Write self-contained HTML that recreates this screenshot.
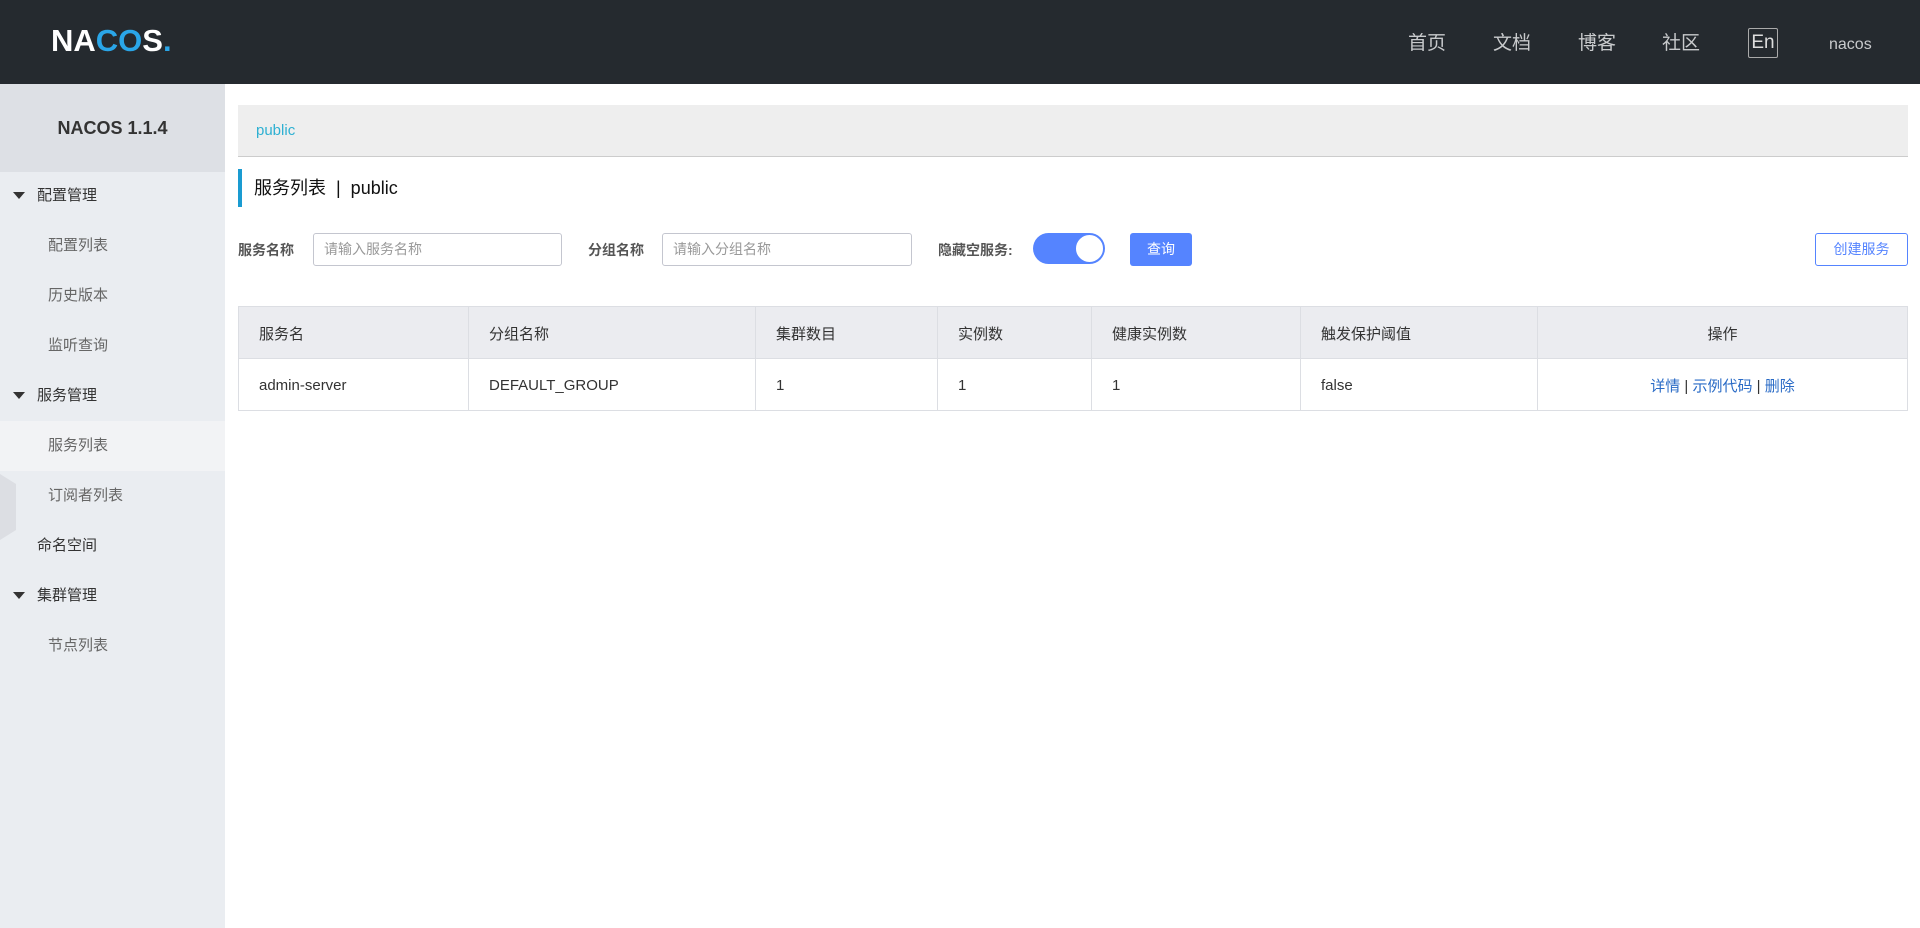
<!DOCTYPE html>
<html><head><meta charset="utf-8">
<style>
*{margin:0;padding:0;box-sizing:border-box}
body{width:1920px;height:928px;overflow:hidden;background:#fff;font-family:"Liberation Sans","Noto Sans CJK SC",sans-serif;color:#333;position:relative}
.hd{position:absolute;left:0;top:0;width:1920px;height:84px;background:#252a2f}
.logo{position:absolute;left:51px;top:23px;font-size:31px;font-weight:bold;color:#fff;letter-spacing:0px;line-height:36px}
.logo .b{color:#2aa6e8}
.nav{position:absolute;top:32px;font-size:19px;color:#c8cacc;line-height:24px}
.en{position:absolute;left:1748px;top:28px;width:30px;height:30px;border:1px solid #aaa;border-radius:2px;color:#ddd;font-size:19px;text-align:center;line-height:28px}
.sb{position:absolute;left:0;top:84px;width:225px;height:844px;background:#eaedf1}
.sbt{height:88px;background:#dde0e5;text-align:center;font-weight:bold;font-size:18px;line-height:88px;color:#333}
.it{position:absolute;left:0;width:225px;height:50px;line-height:50px;font-size:15px;color:#333}
.it.c{padding-left:48px;color:#666}
.it.p{padding-left:37px}
.it.act{background:#f2f3f5}
.tri{position:absolute;left:13px;top:21px;width:0;height:0;border-left:6px solid transparent;border-right:6px solid transparent;border-top:7px solid #333}
.bc{position:absolute;left:238px;top:105px;width:1670px;height:52px;background:#eeeeee;border-bottom:1px solid #ccc;padding-left:18px;line-height:52px;color:#2eb0d2;font-size:15px}
.ttl{position:absolute;left:238px;top:169px;height:38px;border-left:4px solid #1a9bd1;padding-left:12px;line-height:38px;font-size:18px;color:#111}
.lbl{position:absolute;top:238px;font-size:14px;font-weight:bold;color:#555;line-height:24px}
.inp{position:absolute;top:233px;height:33px;border:1px solid #c4c6cf;border-radius:3px;padding-left:10px;line-height:31px;color:#999;font-size:14px}
.sw{position:absolute;left:1033px;top:233px;width:72px;height:31px;border-radius:16px;background:#5584ff}
.sw i{position:absolute;right:1px;top:1px;width:29px;height:29px;border-radius:50%;background:#fff;border:1px solid #5584ff}
.btn{position:absolute;top:233px;height:33px;border-radius:3px;font-size:14px;text-align:center;line-height:33px}
table{position:absolute;left:238px;top:306px;width:1670px;border-collapse:collapse;font-size:15px}
td,th{border:1px solid #dcdee3;height:52px;padding-left:20px;padding-top:2px;text-align:left;font-weight:normal;color:#333}
th{background:#ebecf0}
a{color:#2a6bc6;text-decoration:none}
</style></head><body>
<div class="hd">
 <div class="logo">NA<span class="b">CO</span>S<span class="b">.</span></div>
 <div class="nav" style="left:1408px">首页</div>
 <div class="nav" style="left:1493px">文档</div>
 <div class="nav" style="left:1578px">博客</div>
 <div class="nav" style="left:1662px">社区</div>
 <div class="en">En</div>
 <div class="nav" style="left:1829px;font-size:16px;top:33px">nacos</div>
</div>
<div class="sb">
 <div class="sbt">NACOS 1.1.4</div>
 <div class="it p" style="top:87px"><span class="tri"></span>配置管理</div>
 <div class="it c" style="top:137px">配置列表</div>
 <div class="it c" style="top:187px">历史版本</div>
 <div class="it c" style="top:237px">监听查询</div>
 <div class="it p" style="top:287px"><span class="tri"></span>服务管理</div>
 <div class="it c act" style="top:337px">服务列表</div>
 <div class="it c" style="top:387px">订阅者列表</div>
 <div class="it p" style="top:437px">命名空间</div>
 <div class="it p" style="top:487px"><span class="tri"></span>集群管理</div>
 <div class="it c" style="top:537px">节点列表</div>
 <svg style="position:absolute;left:0;top:390px" width="16" height="66"><polygon points="0,0 16,10 16,56 0,66" fill="#dcdee3"/></svg>
</div>
<div class="bc">public</div>
<div class="ttl">服务列表 &nbsp;|&nbsp; public</div>
<div class="lbl" style="left:238px">服务名称</div>
<div class="inp" style="left:313px;width:249px">请输入服务名称</div>
<div class="lbl" style="left:588px">分组名称</div>
<div class="inp" style="left:662px;width:250px">请输入分组名称</div>
<div class="lbl" style="left:938px">隐藏空服务:</div>
<div class="sw"><i></i></div>
<div class="btn" style="left:1130px;width:62px;background:#5584ff;color:#fff">查询</div>
<div class="btn" style="left:1815px;width:93px;border:1px solid #5584ff;color:#5584ff;line-height:31px">创建服务</div>
<table>
<tr><th style="width:230px">服务名</th><th style="width:287px">分组名称</th><th style="width:182px">集群数目</th><th style="width:154px">实例数</th><th style="width:209px">健康实例数</th><th style="width:237px">触发保护阈值</th><th style="text-align:center;padding-left:0">操作</th></tr>
<tr><td>admin-server</td><td>DEFAULT_GROUP</td><td>1</td><td>1</td><td>1</td><td>false</td><td style="text-align:center;padding-left:0"><a>详情</a> | <a>示例代码</a> | <a>删除</a></td></tr>
</table>
</body></html>
